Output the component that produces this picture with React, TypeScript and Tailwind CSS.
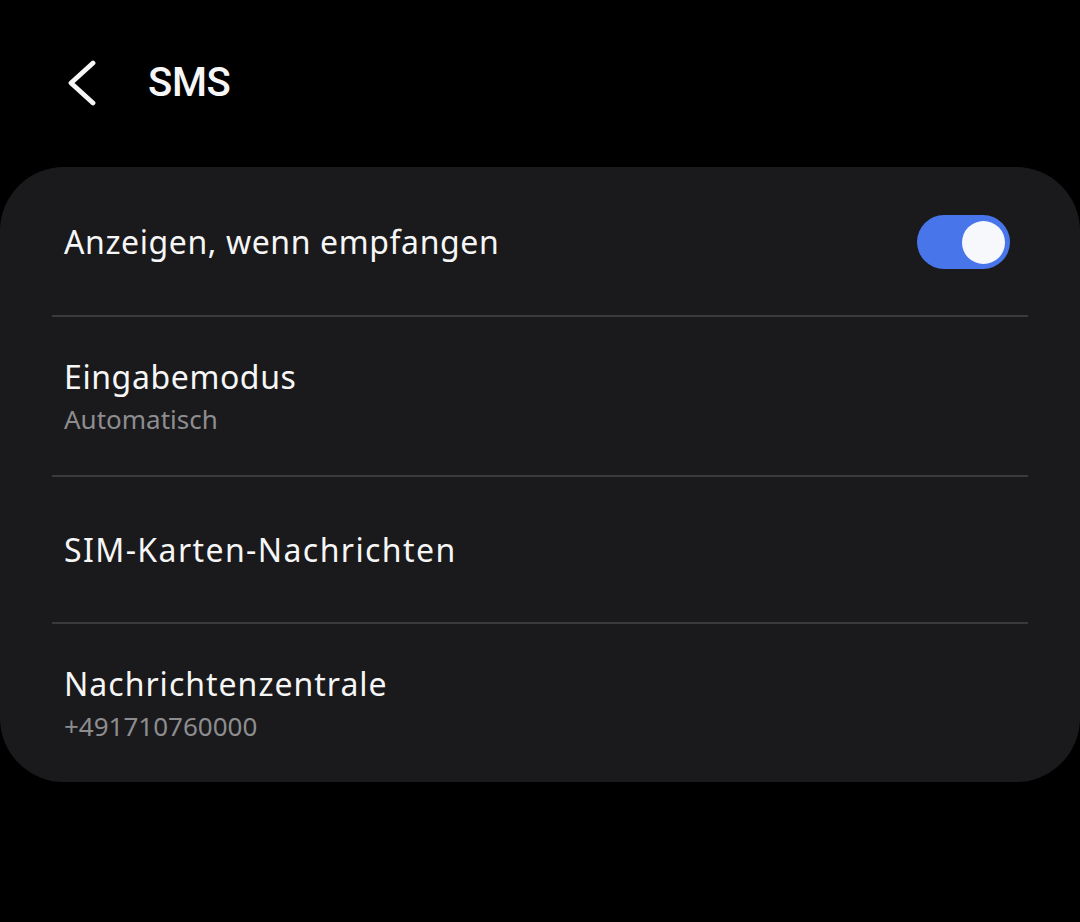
import { useState } from 'react'

const font = { fontFamily: '"Noto Sans", Roboto, sans-serif' }

function Toggle({ on, onChange }: { on: boolean; onChange: () => void }) {
  return (
    <button
      type="button"
      onClick={onChange}
      className={`flex h-[54px] w-[93px] items-center rounded-full px-[5px] ${on ? 'justify-end bg-[#4876ea]' : 'justify-start bg-[#5a5a5e]'}`}
    >
      <span className="h-[43px] w-[43px] rounded-full bg-[#f7f8fc]" />
    </button>
  )
}

function Divider() {
  return <div className="mx-[52px] h-[2px] bg-[#3a3a3c]" />
}

export default function App() {
  const [show, setShow] = useState(true)

  return (
    <div className="min-h-[922px] w-full bg-black text-[#f6f6f6]" style={font}>
      <header className="flex h-[167px] items-center pb-[2px]">
        <button type="button" className="ml-[61px] flex h-[48px] w-[40px] items-center justify-center">
          <svg width="34" height="46" viewBox="0 0 34 46" fill="none" stroke="#f6f6f6" strokeWidth="4.8" strokeLinecap="round" strokeLinejoin="round">
            <path d="M29 3 L7 23 L29 43" />
          </svg>
        </button>
        <h1 className="ml-[47px] text-[40px] font-medium tracking-[-0.3px]" style={{ fontFamily: 'Roboto, sans-serif' }}>SMS</h1>
      </header>

      <section className="rounded-[64px] bg-[#1a1a1c] pb-[2px]">
        <div className="flex h-[148px] items-center justify-between pl-[64px] pr-[70px] pt-[2px]">
          <span className="text-[32px] tracking-[0.6px]">Anzeigen, wenn empfangen</span>
          <Toggle on={show} onChange={() => setShow(!show)} />
        </div>
        <Divider />
        <div className="flex h-[158px] flex-col justify-center pl-[64px] pt-[4px]">
          <span className="text-[32px] leading-[42px] tracking-[0.6px]">Eingabemodus</span>
          <span className="text-[26px] leading-[42px] text-[#8d8d90]">Automatisch</span>
        </div>
        <Divider />
        <div className="flex h-[145px] items-center pl-[64px]">
          <span className="text-[32px] tracking-[1.4px]">SIM-Karten-Nachrichten</span>
        </div>
        <Divider />
        <div className="flex h-[156px] flex-col justify-center pl-[64px] pt-[6px]">
          <span className="text-[32px] leading-[42px] tracking-[1px]">Nachrichtenzentrale</span>
          <span className="text-[26px] leading-[42px] text-[#8d8d90]">+491710760000</span>
        </div>
      </section>
    </div>
  )
}
